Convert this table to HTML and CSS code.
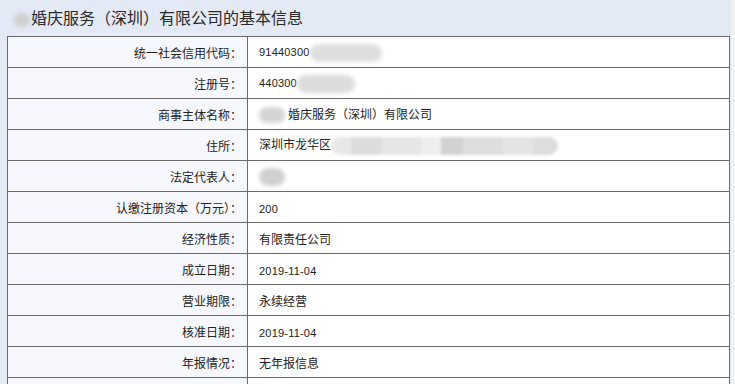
FILE: index.html
```html
<!DOCTYPE html>
<html lang="zh-CN">
<head>
<meta charset="utf-8">
<link rel="stylesheet" href="styles.css">
</head>
<body>
<div class="page">
  <div class="title"><span class="blur blur-title"></span>婚庆服务（深圳）有限公司的基本信息</div>
  <table class="info">
    <tr><th>统一社会信用代码：</th><td><span class="num">91440300</span><span class="blur b1"></span></td></tr>
    <tr><th>注册号：</th><td><span class="num">440300</span><span class="blur b2"></span></td></tr>
    <tr><th>商事主体名称：</th><td><span class="blur b3"></span>婚庆服务（深圳）有限公司</td></tr>
    <tr><th>住所：</th><td>深圳市龙华区<span class="addr"><span class="seg s1"></span><span class="seg s2"></span><span class="seg s3"></span><span class="seg s4"></span><span class="seg s5"></span><span class="seg s6"></span><span class="seg s7"></span><span class="seg s8"></span></span></td></tr>
    <tr><th>法定代表人：</th><td><span class="blur b5"></span></td></tr>
    <tr><th>认缴注册资本（万元）：</th><td><span class="num">200</span></td></tr>
    <tr><th>经济性质：</th><td>有限责任公司</td></tr>
    <tr><th>成立日期：</th><td><span class="num">2019-11-04</span></td></tr>
    <tr><th>营业期限：</th><td>永续经营</td></tr>
    <tr><th>核准日期：</th><td><span class="num">2019-11-04</span></td></tr>
    <tr><th>年报情况：</th><td>无年报信息</td></tr>
    <tr><th></th><td></td></tr>
  </table>
</div>
</body>
</html>
```
FILE: styles.css
```css
html, body {
  margin: 0;
  padding: 0;
  background: #f2f2f2;
  overflow: hidden;
}
.page {
  width: 731px;
  height: 384px;
  overflow: hidden;
  background: #e3e9f5;
  font-family: "Noto Sans CJK SC", "Noto Sans", sans-serif;
  color: #222;
}
.title {
  height: 36px;
  line-height: 34px;
  padding-left: 14px;
  font-size: 16px;
  color: #2a2a2a;
  white-space: nowrap;
}
.info {
  margin-left: 7px;
  width: 723px;
  border-collapse: collapse;
  table-layout: fixed;
  font-size: 12px;
}
.info th, .info td {
  border: 1px solid #6b6b6b;
  height: 30px;
  padding: 0;
  white-space: nowrap;
}
.info th {
  width: 234px;
  background: #f6f8fd;
  text-align: right;
  padding-right: 5px;
  font-weight: normal;
  color: #222;
}
.info td {
  background: #fff;
  padding-left: 11px;
  text-align: left;
  color: #222;
}
.num {
  font-family: "Liberation Sans", Arial, sans-serif;
  font-size: 11px;
  letter-spacing: 0.2px;
}
.blur {
  display: inline-block;
  vertical-align: middle;
  background: #d9d9d9;
  border-radius: 9px;
  filter: blur(2px);
}
.blur-title {
  width: 16px;
  height: 14px;
  margin-right: 1px;
  background: #cfcfcf;
}
.b1 { width: 72px; height: 18px; background: #dedede; }
.b2 { width: 58px; height: 18px; background: #dcdcdc; }
.b3 { width: 26px; height: 16px; margin-right: 3px; background: #d4d4d4; }
.b5 { width: 26px; height: 18px; background: #d0d0d0; }
.addr {
  display: inline-flex;
  vertical-align: middle;
  height: 18px;
  filter: blur(1.5px);
}
.seg { display: block; height: 18px; }
.s1 { width: 20px; background: #e8e8e8; border-radius: 9px 0 0 9px; }
.s2 { width: 30px; background: #dcdcdc; }
.s3 { width: 40px; background: #e6e6e6; }
.s4 { width: 20px; background: #eeeeee; }
.s5 { width: 22px; background: #d2d2d2; }
.s6 { width: 40px; background: #dedede; }
.s7 { width: 30px; background: #e4e4e4; }
.s8 { width: 25px; background: #dddddd; border-radius: 0 9px 9px 0; }
```
